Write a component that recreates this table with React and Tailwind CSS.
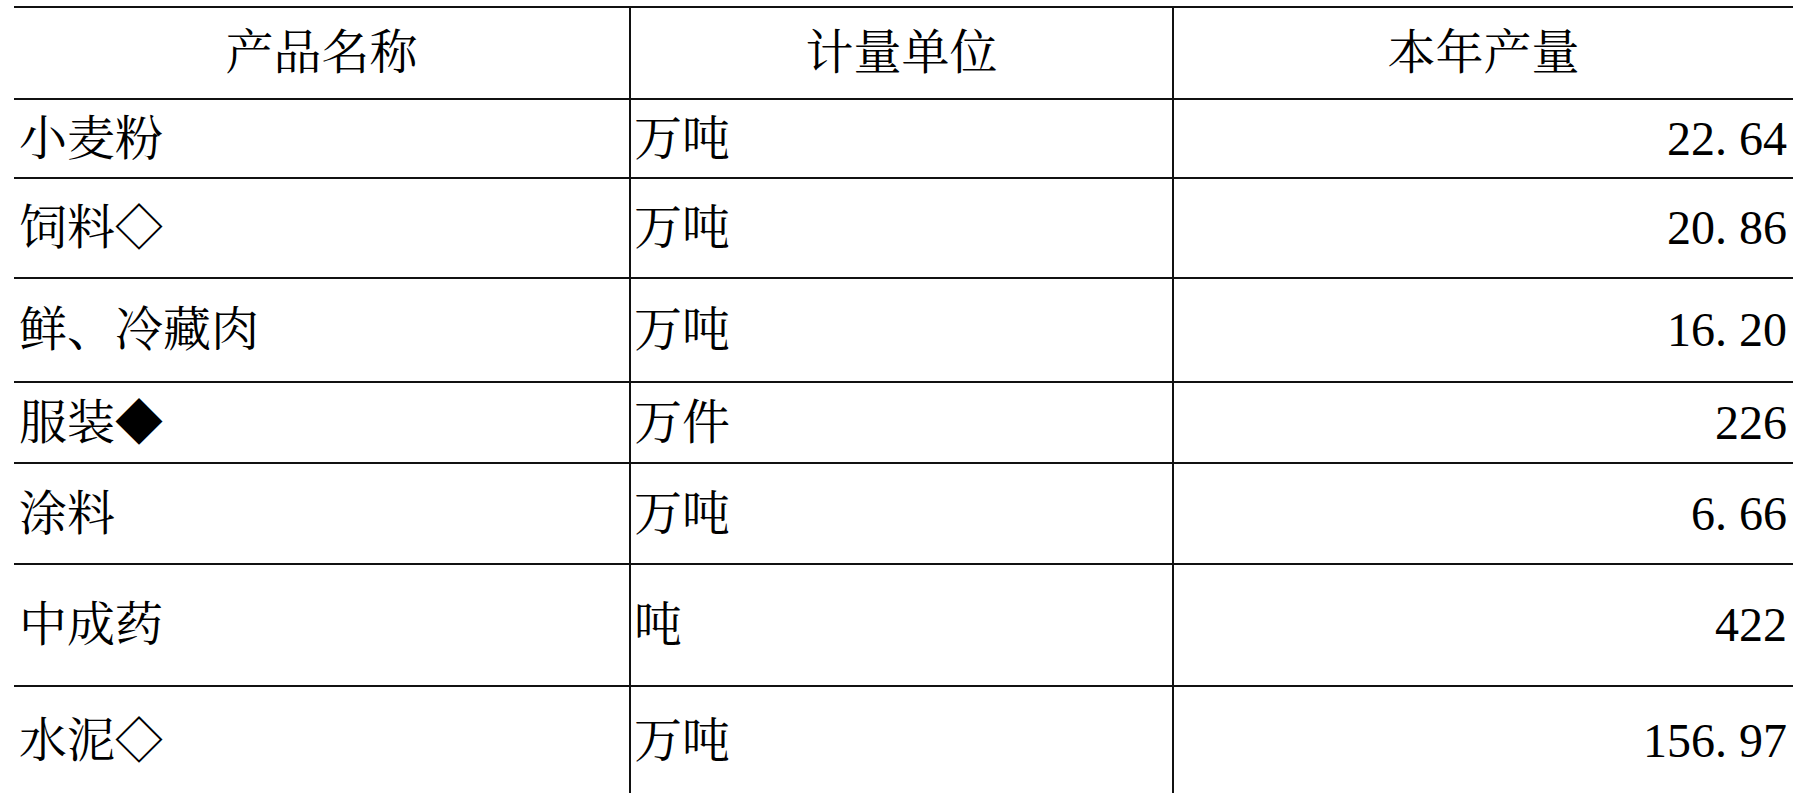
// App.jsx — 产品产量表 (product output table)
const rows = [
    { name: '小麦粉', unit: '万吨', value: '22.64', h: 'h-[79px]' },
    { name: '饲料◇', unit: '万吨', value: '20.86', h: 'h-[100px]' },
    { name: '鲜、冷藏肉', unit: '万吨', value: '16.20', h: 'h-[104px]' },
    { name: '服装◆', unit: '万件', value: '226', h: 'h-[81px]' },
    { name: '涂料', unit: '万吨', value: '6.66', h: 'h-[101px]' },
    { name: '中成药', unit: '吨', value: '422', h: 'h-[122px]' },
    { name: '水泥◇', unit: '万吨', value: '156.97', h: 'h-[110px]' },
]

// SimSun-style numbers: the period takes a full half-width cell
function Num({ value }) {
    const [int, frac] = value.split('.')
    if (frac === undefined) return <span>{int}</span>
    return (
        <span>
            {int}.<span className="inline-block w-[12px]"></span>{frac}
        </span>
    )
}

export default function App() {
    return (
        <div className="min-h-screen bg-white pt-[6px] pl-[14px] font-['Liberation_Serif','Noto_Serif_CJK_SC','Noto_Sans_CJK_SC',serif] text-[48px] leading-none text-black">
            <div className="w-[1779px] border-t-2 border-[#111]">
                {/* Header */}
                <div className="grid grid-cols-[615px_543px_621px] h-[92px] border-b-2 border-[#111]">
                    <div className="flex items-center justify-center">产品名称</div>
                    <div className="flex items-center justify-center border-l-2 border-[#111]">计量单位</div>
                    <div className="flex items-center justify-center border-l-2 border-[#111]">本年产量</div>
                </div>

                {rows.map((r) => (
                    <div key={r.name} className={`grid grid-cols-[615px_543px_621px] border-b-2 border-[#111] ${r.h}`}>
                        <div className="flex items-center pl-[5px]">{r.name}</div>
                        <div className="flex items-center pl-[3px] border-l-2 border-[#111]">{r.unit}</div>
                        <div className="flex items-center justify-end pr-[6px] border-l-2 border-[#111]">
                            <Num value={r.value} />
                        </div>
                    </div>
                ))}
            </div>
        </div>
    )
}
